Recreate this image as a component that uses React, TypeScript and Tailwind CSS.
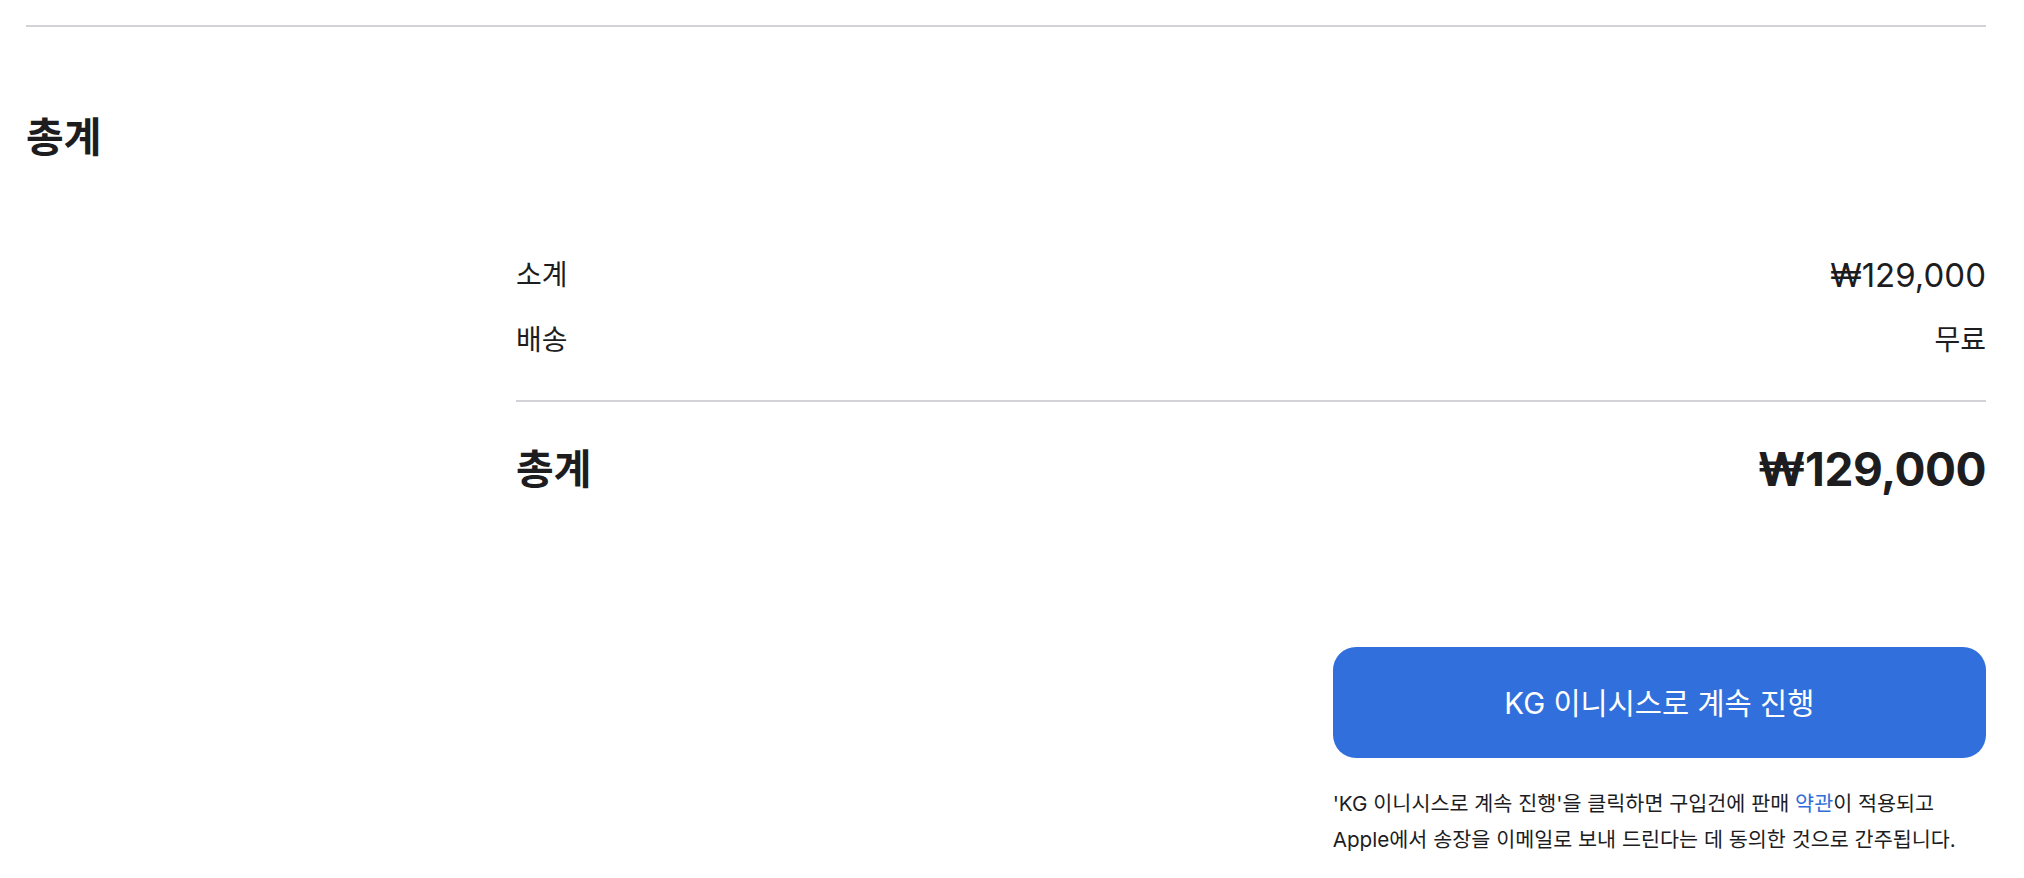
const summary = [
  { label: "소계", value: "₩129,000", priceLike: true },
  { label: "배송", value: "무료", priceLike: false },
];

export default function App() {
  return (
    <div className="min-h-screen bg-white pl-[26px] pr-[38px] font-['Inter','Noto_Sans_CJK_KR',sans-serif] text-[#1d1d1f]">
      <div className="pt-[25px]">
        <div className="h-[2px] bg-[#d2d2d7]" />
      </div>

      <h2 className="mt-[86px] text-[41px] leading-[48px] font-bold">총계</h2>

      <div className="grid grid-cols-4">
        <div className="col-span-3 col-start-2 mt-[94px]">
          <div className="flex flex-col gap-[25px]">
            {summary.map((row) => (
              <div key={row.label} className="flex items-center justify-between h-[40px]">
                <span className="text-[28px] leading-[40px]">{row.label}</span>
                <span className={row.priceLike ? "text-[33px] leading-[40px]" : "text-[28px] leading-[40px]"}>
                  {row.value}
                </span>
              </div>
            ))}
          </div>

          <div className="mt-[40px] h-[2px] bg-[#d2d2d7]" />

          <div className="mt-[43px] flex items-center justify-between h-[48px]">
            <span className="text-[41px] leading-[48px] font-bold">총계</span>
            <span className="text-[46px] leading-[48px] font-bold tracking-[-0.5px]">₩129,000</span>
          </div>
        </div>
      </div>

      <div className="grid grid-cols-3 mt-[154px]">
        <div className="col-start-3">
          <button className="w-full h-[111px] rounded-[23px] bg-[#3170dc] text-white text-[29.5px] leading-[36px]">
            KG 이니시스로 계속 진행
          </button>
          <p className="mt-[28px] text-[20.7px] leading-[36px] break-keep">
            'KG 이니시스로 계속 진행'을 클릭하면 구입건에 판매{" "}
            <a href="#" className="text-[#2f6ed8]">약관</a>이 적용되고 Apple에서 송장을 이메일로 보내 드린다는 데 동의한 것으로 간주됩니다.
          </p>
        </div>
      </div>
    </div>
  );
}
